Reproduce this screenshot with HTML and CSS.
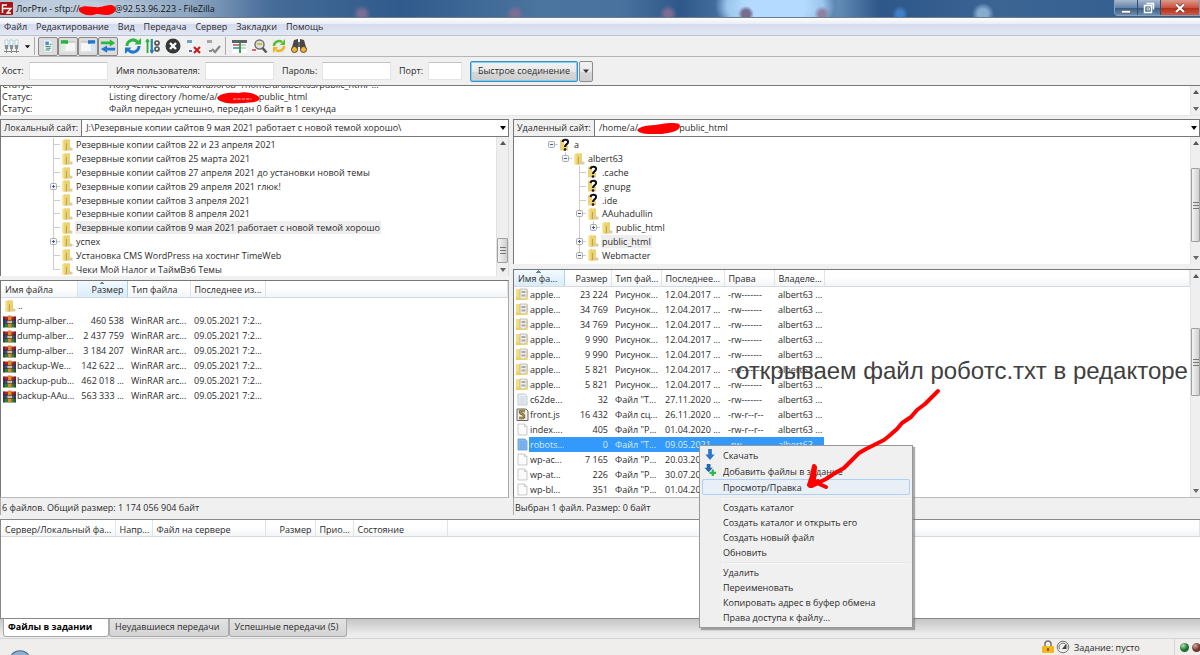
FILE: index.html
```html
<!DOCTYPE html>
<html lang="ru">
<head>
<meta charset="utf-8">
<title>ЛогРти - FileZilla</title>
<link rel="stylesheet" href="styles.css">
</head>
<body>
<svg class="defs" aria-hidden="true">
  <defs>
    <linearGradient id="gold" x1="0" x2="1"><stop offset="0" stop-color="#fbeeb0"/><stop offset="1" stop-color="#e6c65a"/></linearGradient>
    <symbol id="folder" viewBox="0 0 14 14"><path d="M2 2l4-1v12l-4-.5z" fill="url(#gold)"/><path d="M5 2l4-1 1 1v10l-4 1z" fill="#ecd272"/><path d="M6.500 5v7" stroke="#c2a24c"/><path d="M9 9l3.500 1v2.500H7z" fill="#d9cda0"/></symbol>
    <symbol id="unknown" viewBox="0 0 14 14"><path d="M2 2l4-1v11.500H2zM6 7l4 1v4.500H6z" fill="#ecd27b"/><path d="M4.500 4C5 1 11 1 10 4.500 9.500 6.500 7 6.500 7 9" fill="none" stroke="#111" stroke-width="2"/><circle cx="7" cy="11.500" r="1.300" fill="#111"/></symbol>
    <symbol id="plus" viewBox="0 0 9 9"><rect x="1.500" y="1.500" width="6" height="6" rx="1" fill="#f4f4f4" stroke="#aaa"/><path d="M3 4.500h3M4.500 3v3" stroke="#3c5f9e"/></symbol>
    <symbol id="minus" viewBox="0 0 9 9"><rect x="1.500" y="1.500" width="6" height="6" rx="1" fill="#f4f4f4" stroke="#aaa"/><path d="M3 4.500h3" stroke="#3c5f9e"/></symbol>
    <symbol id="rar" viewBox="0 0 13 12"><path d="M0 1h13v3.500H0z" fill="#b5232a"/><path d="M0 4.500h13V8H0z" fill="#3151a5"/><path d="M0 8h13v4H0z" fill="#2f7d3e"/><path d="M0 4.500h13M0 8h13" stroke="#222" stroke-width=".7"/><path d="M1 1v11M12 1v11" stroke="#34242e"/><path d="M5 0h3.500v12H5z" fill="#d98a2b"/><path d="M4 5h5.500v3H4z" fill="#c9c0a8" stroke="#5d3b20" stroke-width=".7"/></symbol>
    <symbol id="image" viewBox="0 0 13 13"><path d="M0 1h6v1h6v10H0z" fill="#f6df78"/><path d="M4 1h7v8l-2 2H4z" fill="#eee" stroke="#aaa" stroke-width=".7"/><path d="M5.500 3h4v2h-4zM5.500 6.500h4v2h-4z" fill="#aaa"/><path d="M0 9l9 3H0z" fill="#efcf52"/></symbol>
    <symbol id="blank" viewBox="0 0 13 13"><path d="M2 1h6.500L11 3.500V12H2z" fill="#fbfbfb" stroke="#bbb" stroke-width=".8"/><path d="M8.500 1v2.500H11" fill="#ddd" stroke="#bbb" stroke-width=".6"/></symbol>
    <symbol id="textfile" viewBox="0 0 13 13"><path d="M2 1h7l2 2v9H2z" fill="#edf2f5" stroke="#b3bdc4" stroke-width=".8"/><path d="M3.500 4h6M3.500 6h6M3.500 8h6M3.500 10h6" stroke="#bfcbd3" stroke-width=".8"/></symbol>
    <symbol id="textsel" viewBox="0 0 13 13"><path d="M2 1h7l2 2v9H2z" fill="#8fc0f5" stroke="#5792d3" stroke-width=".8"/><path d="M3 4h7M3 6h7M3 8h7M3 10h7M5 2v9M8 2v9" stroke="#5b9ae2" stroke-width=".6"/></symbol>
    <symbol id="script" viewBox="0 0 13 13"><path d="M1 1h9l2 2v9.500H1z" fill="#eee" stroke="#555" stroke-width=".9"/><path d="M9 3H5C3 3 4 5.500 6 6s3 3 1 4H3" fill="none" stroke="#5d5030" stroke-width="2.400"/><path d="M9 3H5C3 3 4 5.500 6 6s3 3 1 4H3" fill="none" stroke="#e3bd4f"/></symbol>
  </defs>
</svg>

<header class="titlebar">
  <svg class="app-icon" viewBox="0 0 13 13"><rect width="13" height="13" rx="1" fill="#a81414"/><path d="M2.500 11V3H7M2.500 6.500H6" fill="none" stroke="#fff" stroke-width="1.500"/><path d="M6 6.500h5L7 11h4" fill="none" stroke="#fff" stroke-width="1.300"/></svg>
  <h1 class="title">ЛогРти - sftp://<svg class="redact redact-title" preserveAspectRatio="none" viewBox="0 0 36 12"><path d="M0 4C6 0 14 4 20 3S32-1 35 3c2 5-3 8-9 8-5 0-7-2-12 0C7 12 3 10 0 7z" fill="#f00"/></svg>@92.53.96.223 - FileZilla</h1>
  <div class="win-controls">
    <button class="win" aria-label="Свернуть"><svg viewBox="0 0 12 12"><path d="M1.500 8.500h9v2.500h-9z" fill="#fff" stroke="#555" stroke-width=".6"/></svg></button>
    <button class="win" aria-label="Развернуть"><svg viewBox="0 0 12 12"><path d="M3.500 1.500h7v6M1.500 3.500h7v7h-7z" fill="none" stroke="#fff" stroke-width="1.500"/><path d="M4 6h2.500v2H4z" fill="#38557d" stroke="#fff" stroke-width=".8"/></svg></button>
    <button class="win win-close" aria-label="Закрыть"><svg viewBox="0 0 12 12"><path d="M2 2.500l8 7.500M10 2.500L2 10" stroke="#7a2b23" stroke-width="3.400"/><path d="M2 2.500l8 7.500M10 2.500L2 10" stroke="#fff" stroke-width="2.200"/></svg></button>
  </div>
</header>

<nav class="menubar">
  <button>Файл</button><button>Редактирование</button><button>Вид</button><button>Передача</button><button>Сервер</button><button>Закладки</button><button>Помощь</button>
</nav>

<div class="toolbar">
  <button class="tool tool-site" aria-label="Менеджер сайтов"><svg viewBox="0 0 18 18"><path d="M2 3h3v7H2zM7 3h3v7H7zM12 3h3v7h-3z" fill="#fff" stroke="#aaccd8"/><path d="M2 8h3v4H2zM7 8h3v4H7zM12 8h3v4h-3z" fill="#8a8f91"/><path d="M1 14.500h15M3.500 12v4M8.500 12v4M13.500 12v4" stroke="#848a8c"/></svg></button>
  <button class="tool tool-drop" aria-label="Список сайтов"><svg viewBox="0 0 8 8"><path d="M1 2.500h6L4 6z" fill="#111"/></svg></button>
  <span class="sep"></span>
  <button class="tool pressed" aria-label="Журнал"><svg viewBox="0 0 18 18"><path d="M4 2h7l3 3v11H4z" fill="#eef3f8" stroke="#c5ccd2" stroke-width=".7"/><path d="M6 4h4v4H6z" fill="#4f8fc6"/><path d="M6 9.500h6M6 13.500h5" stroke="#35a04b" stroke-width="1.200"/><path d="M7 11.500h5M11 7h2" stroke="#3d7cbc" stroke-width="1.200"/></svg></button>
  <button class="tool pressed" aria-label="Локальное дерево"><svg viewBox="0 0 18 18"><path d="M1 3h16v12H1z" fill="#f6f6f6"/><path d="M1 3h16v2.500H1z" fill="#c9cccd"/><path d="M1 2.500h8v4H1z" fill="#29b13d"/><path d="M1 6.500h5v8H1z" fill="#d8eedb"/></svg></button>
  <button class="tool pressed" aria-label="Удалённое дерево"><svg viewBox="0 0 18 18"><path d="M1 3h16v12H1z" fill="#f6f6f6"/><path d="M1 3h16v2.500H1z" fill="#c9cccd"/><path d="M9 2.500h8v4H9z" fill="#2377ce"/><path d="M12 6.500h5v8h-5z" fill="#d6e5f5"/></svg></button>
  <button class="tool pressed" aria-label="Очередь"><svg viewBox="0 0 18 18"><path d="M1 4h10V1.500l6 4.200-6 4V7H1z" fill="#29b940"/><path d="M17 11H8V8.500l-7 4 7 4V14h9z" fill="#2377ce"/></svg></button>
  <button class="tool first-action" aria-label="Обновить"><svg viewBox="0 0 18 18"><path d="M3 9a6 6 0 0 1 10.500-4" fill="none" stroke="#2bb741" stroke-width="3"/><path d="M10.500 7.500H17V1z" fill="#2bb741"/><path d="M15 9A6 6 0 0 1 4.500 13" fill="none" stroke="#2377ce" stroke-width="3"/><path d="M7.500 10.500H1V17z" fill="#2377ce"/></svg></button>
  <button class="tool" aria-label="Обработка очереди"><svg viewBox="0 0 18 18"><path d="M3.500 2v14M2 5l1.500-2L5 5M7.500 2v14" stroke="#29ad3d" stroke-width="1.800" fill="none"/><path d="M8 2v14M6.500 13L8 15.500 9.500 13" stroke="#2377ce" stroke-width="1.500" fill="none"/><circle cx="13" cy="6" r="2" fill="none" stroke="#555" stroke-width="1.700"/><circle cx="13" cy="12" r="2" fill="none" stroke="#555" stroke-width="1.700"/></svg></button>
  <button class="tool" aria-label="Отменить"><svg viewBox="0 0 18 18"><circle cx="9" cy="9" r="7.500" fill="#36393a"/><path d="M6 6l6 6M12 6l-6 6" stroke="#fff" stroke-width="2.400"/></svg></button>
  <button class="tool" aria-label="Отключиться"><svg viewBox="0 0 18 18"><path d="M3 2h7v14H3z" fill="#eef3f6"/><path d="M3 3h5v3H3z" fill="#719fc5"/><path d="M5 13h3v2H5z" fill="#668"/><path d="M10 10l6 6M16 10l-6 6" stroke="#c41f1f" stroke-width="2.200"/></svg></button>
  <button class="tool" aria-label="Переподключиться"><svg viewBox="0 0 18 18"><path d="M2 2h7v14H2z" fill="#eee"/><path d="M3 3h5v3H3z" fill="#a3a7a9"/><path d="M5 13h3v2H5z" fill="#888"/><path d="M8 12l3 3 5-6" fill="none" stroke="#888" stroke-width="2.200"/></svg></button>
  <span class="sep"></span>
  <button class="tool" aria-label="Фильтр"><svg viewBox="0 0 18 18"><path d="M2 3h15v13H2z" fill="#fff"/><path d="M2 3h15v3H2z" fill="#5d6265"/><path d="M3 8h6" stroke="#c54b4b" stroke-width="1.500"/><path d="M3 11h6" stroke="#3a7ec0" stroke-width="1.500"/><path d="M11 8h5M11 11h5" stroke="#999"/><path d="M9 6h2v10H9z" fill="#31a748"/></svg></button>
  <button class="tool" aria-label="Сравнение каталогов"><svg viewBox="0 0 18 18"><path d="M1 3h12v12H1z" fill="#f3f3f3"/><path d="M2 13h4" stroke="#d33" stroke-width="1.500"/><circle cx="9.500" cy="7.500" r="4.500" fill="#d6e4dc" stroke="#737373" stroke-width="1.500"/><path d="M7 7h5" stroke="#dfae55" stroke-width="2"/><path d="M12.500 11l4 4.500" stroke="#555" stroke-width="2.500"/></svg></button>
  <button class="tool" aria-label="Синхронный просмотр"><svg viewBox="0 0 18 18"><path d="M2 2h13v14H2z" fill="#e8ecee"/><path d="M4 9a5 5 0 0 1 8-4" fill="none" stroke="#58bd2f" stroke-width="2.500"/><path d="M10 8h5V2z" fill="#58bd2f"/><path d="M14 9a5 5 0 0 1-8 4" fill="none" stroke="#efb520" stroke-width="2.500"/><path d="M8 10H3v6z" fill="#efb520"/></svg></button>
  <button class="tool" aria-label="Поиск"><svg viewBox="0 0 18 18"><path d="M4 3l4-1v10H1.500zM14 3l-4-1v10h6.500z" fill="#494747"/><path d="M8 5h2v5H8z" fill="#656565"/><circle cx="4.500" cy="12.500" r="3" fill="#f3b43d" stroke="#574429"/><circle cx="13.500" cy="12.500" r="3" fill="#f3b43d" stroke="#574429"/></svg></button>
</div>

<form class="quick">
  <label for="host">Хост:</label><input id="host">
  <label for="user">Имя пользователя:</label><input id="user">
  <label for="pass">Пароль:</label><input id="pass" type="password">
  <label for="port">Порт:</label><input id="port">
  <button class="connect" type="button">Быстрое соединение</button>
  <button class="connect-drop" type="button" aria-label="История"><svg viewBox="0 0 8 8"><path d="M1 2.500h6L4 6z" fill="#333"/></svg></button>
</form>

<section class="log">
  <div class="log-lines">
    <p><span>Статус:</span><span>Получение списка каталогов "/home/a/albert63/public_html"...</span></p>
    <p><span>Статус:</span><span>Listing directory /home/a/<svg class="redact redact-log" preserveAspectRatio="none" viewBox="0 0 40 12"><path d="M0 6C2 1 13 0 20 1c7-2 17 1 19 4 3 5-8 6-14 6-9 1-22 1-25-5z" fill="#f00"/><path d="M15 7h17" stroke="#ffc2c2" stroke-dasharray="3 1"/></svg>public_html</span></p>
    <p><span>Статус:</span><span>Файл передан успешно, передан 0 байт в 1 секунда</span></p>
  </div>
  <div class="scroll"><i class="up"></i><i class="down"></i></div>
</section>

<main class="sites">
  <section class="site site-local">
    <div class="path"><label for="local">Локальный сайт:</label><button class="path-box" id="local"><span>J:\Резервные копии сайтов 9 мая 2021 работает с новой темой хорошо\</span><i class="caret"></i></button></div>
    <div class="tree-wrap tree-local">
      <ul class="tree">
        <li><b class="branch"></b><svg class="ic"><use href="#folder"/></svg><span>Резервные копии сайтов 22 и 23 апреля 2021</span></li>
        <li><b class="branch"></b><svg class="ic"><use href="#folder"/></svg><span>Резервные копии сайтов 25 марта 2021</span></li>
        <li><b class="branch"></b><svg class="ic"><use href="#folder"/></svg><span>Резервные копии сайтов 27 апреля 2021 до установки новой темы</span></li>
        <li><b class="branch"><svg><use href="#plus"/></svg></b><svg class="ic"><use href="#folder"/></svg><span>Резервные копии сайтов 29 апреля 2021 глюк!</span></li>
        <li><b class="branch"></b><svg class="ic"><use href="#folder"/></svg><span>Резервные копии сайтов 3 апреля 2021</span></li>
        <li><b class="branch"></b><svg class="ic"><use href="#folder"/></svg><span>Резервные копии сайтов 8 апреля 2021</span></li>
        <li><b class="branch"></b><svg class="ic"><use href="#folder"/></svg><span class="chosen">Резервные копии сайтов 9 мая 2021 работает с новой темой хорошо</span></li>
        <li><b class="branch"><svg><use href="#plus"/></svg></b><svg class="ic"><use href="#folder"/></svg><span>успех</span></li>
        <li><b class="branch"></b><svg class="ic"><use href="#folder"/></svg><span>Установка CMS WordPress на хостинг TimeWeb</span></li>
        <li><b class="branch last"></b><svg class="ic"><use href="#folder"/></svg><span>Чеки Мой Налог и ТаймВэб Темы</span></li>
      </ul>
      <div class="scroll"><i class="up"></i><i class="thumb thumb-low"></i><i class="down"></i></div>
    </div>
    <div class="list-wrap">
      <table class="list">
        <colgroup><col class="l1"><col class="l2"><col class="l3"><col class="l4"><col></colgroup>
        <thead><tr><th>Имя файла</th><th class="num sorted">Размер</th><th>Тип файла</th><th>Последнее из...</th><th></th></tr></thead>
        <tbody>
          <tr><td><svg class="ic"><use href="#folder"/></svg>..</td><td></td><td></td><td></td><td></td></tr>
          <tr><td><svg class="fi"><use href="#rar"/></svg>dump-alber...</td><td class="num">460 538</td><td>WinRAR arc...</td><td>09.05.2021 7:2...</td><td></td></tr>
          <tr><td><svg class="fi"><use href="#rar"/></svg>dump-alber...</td><td class="num">2 437 759</td><td>WinRAR arc...</td><td>09.05.2021 7:2...</td><td></td></tr>
          <tr><td><svg class="fi"><use href="#rar"/></svg>dump-alber...</td><td class="num">3 184 207</td><td>WinRAR arc...</td><td>09.05.2021 7:2...</td><td></td></tr>
          <tr><td><svg class="fi"><use href="#rar"/></svg>backup-We...</td><td class="num">142 622 ...</td><td>WinRAR arc...</td><td>09.05.2021 7:2...</td><td></td></tr>
          <tr><td><svg class="fi"><use href="#rar"/></svg>backup-pub...</td><td class="num">462 018 ...</td><td>WinRAR arc...</td><td>09.05.2021 7:2...</td><td></td></tr>
          <tr><td><svg class="fi"><use href="#rar"/></svg>backup-AAu...</td><td class="num">563 333 ...</td><td>WinRAR arc...</td><td>09.05.2021 7:2...</td><td></td></tr>
        </tbody>
      </table>
    </div>
    <p class="summary">6 файлов. Общий размер: 1 174 056 904 байт</p>
  </section>

  <section class="site site-remote">
    <div class="path"><label for="remote">Удаленный сайт:</label><button class="path-box" id="remote"><span>/home/a/<svg class="redact redact-path" preserveAspectRatio="none" viewBox="0 0 40 12"><path d="M0 7C6 1 15 3 23 1c7-1 17-2 17 2 0 5-9 7-17 8-9 0-20 1-23-4z" fill="#f00"/></svg>public_html</span><i class="caret"></i></button></div>
    <div class="tree-wrap tree-remote">
      <ul class="tree">
        <li class="d0"><b class="branch only"><svg><use href="#minus"/></svg></b><svg class="ic"><use href="#unknown"/></svg><span>a</span></li>
        <li class="d1"><b class="branch last"><svg><use href="#minus"/></svg></b><svg class="ic"><use href="#folder"/></svg><span>albert63</span></li>
        <li class="d2"><b class="branch"></b><svg class="ic"><use href="#unknown"/></svg><span>.cache</span></li>
        <li class="d2"><b class="branch"></b><svg class="ic"><use href="#unknown"/></svg><span>.gnupg</span></li>
        <li class="d2"><b class="branch"></b><svg class="ic"><use href="#unknown"/></svg><span>.ide</span></li>
        <li class="d2"><b class="branch"><svg><use href="#minus"/></svg></b><svg class="ic"><use href="#folder"/></svg><span>AAuhadullin</span></li>
        <li class="d2"><b class="branch pass"></b><b class="branch last"><svg><use href="#plus"/></svg></b><svg class="ic"><use href="#folder"/></svg><span>public_html</span></li>
        <li class="d2"><b class="branch"><svg><use href="#plus"/></svg></b><svg class="ic"><use href="#folder"/></svg><span class="chosen">public_html</span></li>
        <li class="d2"><b class="branch last"><svg><use href="#minus"/></svg></b><svg class="ic"><use href="#folder"/></svg><span>Webmacter</span></li>
      </ul>
      <div class="scroll"><i class="up"></i><i class="thumb thumb-mid"></i><i class="down"></i></div>
    </div>
    <div class="list-wrap">
      <table class="list">
        <colgroup><col class="r1"><col class="r2"><col class="r3"><col class="r4"><col class="r5"><col class="r6"><col></colgroup>
        <thead><tr><th class="sorted">Имя фа...</th><th class="num">Размер</th><th>Тип фай...</th><th>Последнее...</th><th>Права</th><th>Владеле...</th><th></th></tr></thead>
        <tbody>
          <tr><td><svg class="fi"><use href="#image"/></svg>apple...</td><td class="num">23 224</td><td>Рисунок...</td><td>12.04.2017 ...</td><td>-rw-------</td><td>albert63 ...</td><td></td></tr>
          <tr><td><svg class="fi"><use href="#image"/></svg>apple...</td><td class="num">34 769</td><td>Рисунок...</td><td>12.04.2017 ...</td><td>-rw-------</td><td>albert63 ...</td><td></td></tr>
          <tr><td><svg class="fi"><use href="#image"/></svg>apple...</td><td class="num">34 769</td><td>Рисунок...</td><td>12.04.2017 ...</td><td>-rw-------</td><td>albert63 ...</td><td></td></tr>
          <tr><td><svg class="fi"><use href="#image"/></svg>apple...</td><td class="num">9 990</td><td>Рисунок...</td><td>12.04.2017 ...</td><td>-rw-------</td><td>albert63 ...</td><td></td></tr>
          <tr><td><svg class="fi"><use href="#image"/></svg>apple...</td><td class="num">9 990</td><td>Рисунок...</td><td>12.04.2017 ...</td><td>-rw-------</td><td>albert63 ...</td><td></td></tr>
          <tr><td><svg class="fi"><use href="#image"/></svg>apple...</td><td class="num">5 821</td><td>Рисунок...</td><td>12.04.2017 ...</td><td>-rw-------</td><td>albert63 ...</td><td></td></tr>
          <tr><td><svg class="fi"><use href="#image"/></svg>apple...</td><td class="num">5 821</td><td>Рисунок...</td><td>12.04.2017 ...</td><td>-rw-------</td><td>albert63 ...</td><td></td></tr>
          <tr><td><svg class="fi"><use href="#textfile"/></svg>c62de...</td><td class="num">32</td><td>Файл "T...</td><td>27.11.2020 ...</td><td>-rw-------</td><td>albert63 ...</td><td></td></tr>
          <tr><td><svg class="fi"><use href="#script"/></svg>front.js</td><td class="num">16 432</td><td>Файл сц...</td><td>26.11.2020 ...</td><td>-rw-r--r--</td><td>albert63 ...</td><td></td></tr>
          <tr><td><svg class="fi"><use href="#blank"/></svg>index....</td><td class="num">405</td><td>Файл "P...</td><td>01.04.2020 ...</td><td>-rw-r--r--</td><td>albert63 ...</td><td></td></tr>
          <tr class="selected"><td><svg class="fi"><use href="#textsel"/></svg>robots...</td><td class="num">0</td><td>Файл "T...</td><td>09.05.2021 ...</td><td>-rw-------</td><td>albert63 ...</td><td></td></tr>
          <tr><td><svg class="fi"><use href="#blank"/></svg>wp-ac...</td><td class="num">7 165</td><td>Файл "P...</td><td>20.03.2020 ...</td><td></td><td></td><td></td></tr>
          <tr><td><svg class="fi"><use href="#blank"/></svg>wp-at...</td><td class="num">226</td><td>Файл "P...</td><td>30.07.2020 ...</td><td></td><td></td><td></td></tr>
          <tr><td><svg class="fi"><use href="#blank"/></svg>wp-bl...</td><td class="num">351</td><td>Файл "P...</td><td>01.04.2020 ...</td><td></td><td></td><td></td></tr>
        </tbody>
      </table>
      <div class="scroll"><i class="up"></i><i class="thumb thumb-list"></i><i class="down"></i></div>
    </div>
    <p class="summary">Выбран 1 файл. Размер: 0 байт</p>
  </section>
</main>

<section class="queue">
  <table class="list">
    <colgroup><col class="q1"><col class="q2"><col class="q3"><col class="q4"><col class="q5"><col class="q6"><col></colgroup>
    <thead><tr><th>Сервер/Локальный фа...</th><th>Напр...</th><th>Файл на сервере</th><th class="num">Размер</th><th>Прио...</th><th>Состояние</th><th></th></tr></thead>
  </table>
</section>

<nav class="tabs">
  <button class="tab tab-on">Файлы в задании</button><button class="tab">Неудавшиеся передачи</button><button class="tab">Успешные передачи (5)</button>
</nav>

<footer class="statusbar">
  <svg class="orb" viewBox="0 0 28 8"><ellipse cx="14" cy="10" rx="12" ry="9" fill="#8fb1d0" stroke="#44688f" stroke-width="1.500"/></svg>
  <div class="status-right">
    <svg class="lock" viewBox="0 0 12 14"><path d="M3 7V4a3 3 0 0 1 6 0v3" fill="none" stroke="#777" stroke-width="1.600"/><rect y="6" width="12" height="7" rx="1" fill="#f3b61d"/><path d="M6 8v3" stroke="#6b4a00" stroke-width="1.500"/></svg>
    <svg class="gauge" viewBox="0 0 14 14"><circle cx="7" cy="7" r="5.800" fill="#eee" stroke="#777"/><path d="M3.500 9a4 4 0 1 1 7 0" fill="none" stroke="#777"/><path d="M6 9l4-5v5z" fill="#444"/></svg>
    <span class="job">Задание: пусто</span>
    <i class="led led-green"></i><i class="led led-red"></i>
  </div>
</footer>

<menu class="context">
  <li><button><svg viewBox="0 0 14 14"><path d="M5 1h4v6h3l-5 6-5-6h3z" fill="#2b78cb"/></svg>Скачать</button></li>
  <li><button><svg viewBox="0 0 14 14"><path d="M3.500 0h4v4H10l-4.500 5L1 4h2.500z" fill="#2468ae"/><path d="M10 6v7M6.500 9.500h7" stroke="#2eb84a" stroke-width="2.400"/></svg>Добавить файлы в задание</button></li>
  <li><button class="hover">Просмотр/Правка</button></li>
  <li class="rule"></li>
  <li><button>Создать каталог</button></li>
  <li><button>Создать каталог и открыть его</button></li>
  <li><button>Создать новый файл</button></li>
  <li><button>Обновить</button></li>
  <li class="rule"></li>
  <li><button>Удалить</button></li>
  <li><button>Переименовать</button></li>
  <li><button>Копировать адрес в буфер обмена</button></li>
  <li><button>Права доступа к файлу...</button></li>
</menu>

<p class="note">открываем файл роботс.тхт в редакторе</p>
<svg class="arrow" viewBox="0 0 140 104"><path d="M133 6L126 13 120 19 112 25 106 32 97 38 92 44 84 51 79 55 71 59 61 64 54 68 47 75 39 83 30 88 21 94 7 101" fill="none" stroke="#f00" stroke-width="4" stroke-linecap="round" stroke-linejoin="round"/><path d="M9 81L7 91 4 100 12 98 21 102M10 82l-1 12-4 7 8-5" fill="none" stroke="#f00" stroke-width="4" stroke-linecap="round" stroke-linejoin="round"/></svg>
</body>
</html>
```
FILE: styles.css
```css
* { box-sizing: border-box; }
body {
  margin: 0;
  min-height: 100vh;
  position: relative;
  display: flex;
  flex-direction: column;
  overflow: hidden;
  background: #f0f0f0;
  color: #2b2b2b;
  font: 9px/14px "Open Sans", "Noto Sans", sans-serif;
}
button, input { font: inherit; color: inherit; margin: 0; padding: 0; border: 0; background: none; border-radius: 0; }
p, h1, ul, menu { margin: 0; padding: 0; list-style: none; font-weight: normal; }
svg { display: block; flex: none; }
i { display: block; }
.defs { position: absolute; width: 0; height: 0; }
.redact { display: inline-block; vertical-align: middle; height: 12px; margin: -2px -1px; }
.redact-title { width: 37px; }
.redact-log { width: 43px; }
.redact-path { width: 43px; }

.titlebar {
  display: flex;
  height: 18px;
  background:
    radial-gradient(ellipse 120px 20px at 60px 9px, #c5d3e2d0 40%, transparent),
    radial-gradient(circle at 515px 14px, #7c6d93 3px, transparent 9px),
    radial-gradient(circle at 668px 14px, #7c6d93 3px, transparent 9px),
    radial-gradient(circle at 362px 14px, #7c6d93 3px, transparent 9px),
    radial-gradient(circle at 746px 14px, #766e8e 4px, transparent 8px),
    radial-gradient(circle at 822px 14px, #8f809f 3px, transparent 8px),
    radial-gradient(circle at 900px 14px, #3f80c8 3px, transparent 8px),
    radial-gradient(circle at 983px 14px, #86acd0 5px, transparent 11px),
    radial-gradient(ellipse 60px 34px at 775px 6px, #b4daff 50%, #9cc6ee 80%, transparent),
    linear-gradient(90deg, #a2b7ce 0, #8fa8c3 190px, #466c98 270px, #2f5a8b 400px, #4b749f 540px, #4a729f 620px, #2e588a 680px, #4a75a2 730px, #6089b3 840px, #2e578a 880px, #3c6594 1000px, #2f5c8d);
  border-bottom: 1px solid #6d7b8b;
}
.app-icon { width: 13px; height: 13px; margin-top: 2px; }
.title { flex: 1; padding-left: 3px; font-size: 9px; line-height: 18px; color: #111; white-space: nowrap; }
.win-controls { display: flex; height: 16px; border: 1px solid #dbe4ee80; border-top: 0; border-radius: 0 0 0 4px; }
.win { display: grid; place-items: center; width: 23px; background: linear-gradient(#a7bacf, #6684a8 50%, #34577f 51%, #6b8cb0); border-right: 1px solid #34506f; }
.win svg { width: 12px; height: 12px; }
.win-close { width: 38px; border: 0; background: linear-gradient(#dc9a8c, #c95441 50%, #b02b16 51%, #cf5a45); }

.menubar { display: flex; gap: 9px; height: 18px; padding-left: 4px; background: linear-gradient(#fdfdfe, #eaeff5 33%, #d5dbee 34%, #e2e7f3); border-bottom: 1px solid #b9c3d2; }

.toolbar { display: flex; align-items: center; height: 21px; padding-left: 2px; border-bottom: 1px solid #b5b5b5; }
.tool { display: grid; place-items: center; width: 20px; height: 20px; }
.tool svg { width: 18px; height: 18px; }
.tool-drop { width: 10px; }
.tool-drop svg { width: 7px; height: 7px; }
.sep { width: 1px; height: 18px; margin: 0 3px 0 2px; background: #aaa; }
.pressed { height: 19px; border: 1px solid #888; border-radius: 2px; background: #dcdcdc; }
.pressed svg { width: 16px; height: 16px; }
.first-action { margin-left: 5px; }

.quick { display: flex; align-items: center; height: 28px; }
.quick label { padding-left: 8px; white-space: nowrap; }
.quick label[for="host"] { padding-left: 2px; width: 29px; }
.quick label[for="user"] { width: 97px; }
.quick label[for="pass"] { width: 48px; }
.quick label[for="port"] { width: 37px; }
.quick input { width: 69px; height: 18px; background: #fff; border: 1px solid #e3e3e3; border-top-color: #c4c4c4; }
.quick #host { width: 79px; }
.quick #port { width: 34px; }
.connect { width: 108px; height: 21px; margin-left: 8px; border: 1px solid #3c8fc4; border-radius: 2px; box-shadow: inset 0 0 0 1px #7fcdf0; background: linear-gradient(#f2f2f2, #e8e8e8 50%, #d6d6d6 51%, #cfcfcf); white-space: nowrap; }
.connect-drop { display: grid; place-items: center; width: 14px; height: 21px; margin-left: 1px; border: 1px solid #8c8c8c; border-radius: 2px; background: linear-gradient(#f2f2f2, #e8e8e8 50%, #d6d6d6 51%, #cfcfcf); }
.connect-drop svg { width: 8px; height: 8px; }

.log { display: flex; height: 31px; background: #fff; border: 1px solid #777; border-width: 1px 0 1px 1px; border-bottom-color: #e6e6e6; overflow: hidden; }
.log-lines { flex: 1; display: flex; flex-direction: column; justify-content: flex-end; line-height: 12px; }
.log p { display: grid; grid-template-columns: 107px 1fr; padding-left: 1px; height: 12px; flex: none; white-space: nowrap; }

.scroll { flex: none; display: flex; flex-direction: column; align-items: center; width: 10px; padding: 4px 0; background: #efefef; border-left: 1px solid #e2e2e2; }
.tree-local .scroll { width: 13px; border-right: 1px solid #ddd; }
.up, .down { border: 3px solid transparent; }
.up { border-top: 0; border-bottom: 4px solid #555; }
.down { border-bottom: 0; border-top: 4px solid #666; margin-top: auto; }
.thumb { width: 100%; height: 25px; margin-top: auto; border: 1px solid #a0a0a0; border-radius: 1px; background: repeating-linear-gradient(#777 0 1px, transparent 1px 3px) center / 6px 7px no-repeat, linear-gradient(90deg, #f4f4f4, #cfcfcf); }
.thumb-low + .down { margin-top: 5px; }
.thumb-mid { height: 74px; }
.thumb-mid + .down { margin-top: 14px; }
.thumb-list { height: 68px; margin-top: 50px; }

.sites { flex: 1; display: grid; grid-template-columns: 509fr 687fr; gap: 4px; padding-top: 3px; }
.site { min-width: 0; display: flex; flex-direction: column; }
.path { display: flex; height: 18px; border: 1px solid #777; background: #f0f0f0; line-height: 16px; }
.path label { flex: none; padding: 0 3px; border-right: 1px solid #777; white-space: nowrap; }
.path-box { flex: 1; display: flex; align-items: center; justify-content: space-between; padding: 0 2px 0 4px; background: #fff; text-align: left; white-space: nowrap; }
.caret { border: 3px solid transparent; border-top: 4px solid #000; border-bottom: 0; }

.tree-wrap { display: flex; background: #fff; border-left: 1px solid #777; overflow: hidden; }
.tree-local { height: 139px; }
.tree-remote { height: 127px; }
.tree { flex: 1; display: flex; flex-direction: column; padding-top: 1px; }
.tree-remote .tree { padding-bottom: 2px; }
.tree li { flex: 1; display: flex; align-items: center; padding-left: 45px; white-space: nowrap; min-height: 0; }
.tree .d0 { padding-left: 30px; }
.tree .d1 { padding-left: 44px; }
.tree .d2 { padding-left: 58px; }
.tree li > span { padding: 0 1px; line-height: 13px; }
.tree .chosen { background: #eee; }
.ic { width: 14px; height: 14px; margin-right: 1px; }
.branch { align-self: stretch; display: grid; place-items: center; width: 14px; background: linear-gradient(#ccc, #ccc) 7px 0 / 1px 100% no-repeat, linear-gradient(#ccc, #ccc) 100% 50% / 7px 1px no-repeat; }
.branch svg { width: 9px; height: 9px; }
.branch.last { background: linear-gradient(#ccc, #ccc) 7px 0 / 1px 50% no-repeat, linear-gradient(#ccc, #ccc) 100% 50% / 7px 1px no-repeat; }
.branch.only { background: linear-gradient(#ccc, #ccc) 100% 50% / 7px 1px no-repeat; }
.branch.pass { background: linear-gradient(#ccc, #ccc) 7px 0 / 1px 100% no-repeat; }

.list-wrap { flex: 1; display: flex; align-items: stretch; margin-top: 4px; background: #fff; border: 1px solid #777; border-width: 1px 0 1px 1px; border-bottom-color: #bbb; overflow: hidden; }
.site-local .list-wrap { border-right: 1px solid #aaa; }
.tree-remote + .list-wrap { margin-top: 5px; }
.list { width: 100%; height: max-content; table-layout: fixed; border-collapse: collapse; }
.list-wrap .list { flex: 1; min-width: 0; }
.list th, .list td { padding: 0 4px; height: 15px; line-height: 15px; text-align: left; font-weight: normal; white-space: nowrap; overflow: hidden; }
.list th { height: 16px; padding-top: 2px; line-height: 13px; background: linear-gradient(#fff 40%, #f2f4f6); border-right: 1px solid #e0e4e8; border-bottom: 1px solid #d5dade; }
.list .num { text-align: right; padding-right: 3px; }
.list th.sorted { background: conic-gradient(from 135deg at 50% 0, #5f86a8 90deg, transparent 0) center top / 6px 3px no-repeat, linear-gradient(#f3fafe, #d9ecf9); border-right-color: #a9d3ee; }
.list td:first-child { padding-left: 2px; padding-right: 0; }
.list td svg { display: inline-block; vertical-align: middle; }
.fi { width: 13px; height: 13px; margin-right: 1px; margin-top: -1px; }
.l1 { width: 76px; } .l2 { width: 50px; } .l3 { width: 63px; } .l4 { width: 75px; }
.r1 { width: 50px; } .r2 { width: 47px; } .r3 { width: 50px; } .r4 { width: 63px; } .r5 { width: 50px; } .r6 { width: 50px; }
.q1 { width: 114px; } .q2 { width: 37px; } .q3 { width: 113px; } .q4 { width: 50px; } .q5 { width: 38px; } .q6 { width: 94px; }
.selected td { background: #3399fa; color: #d9ecff; }
.selected td:first-child { background: linear-gradient(90deg, #fff 15px, #3399fa 15px); }
.selected td:last-child { background: #fff; }
.summary { height: 17px; line-height: 19px; border-left: 1px solid #aaa; padding-left: 1px; }

.queue { height: 100px; margin-top: 4px; background: #fff; border: 1px solid #888; border-right: 0; }
.queue .list th { padding-top: 3px; }
.tabs { display: flex; height: 20px; padding-left: 3px; background: linear-gradient(#c6c6c6, #ececec 80%); border-bottom: 1px solid #d5d5d5; }
.tab { height: 18px; padding: 0 8px 0 5px; border: 1px solid #aaa; border-top: 0; border-radius: 0 0 3px 3px; background: linear-gradient(#e2e2e2, #d5d5d5); white-space: nowrap; }
.tab-on { width: 106px; padding-left: 4px; background: #fff; font-weight: bold; text-align: left; color: #000; }

.statusbar { display: flex; justify-content: space-between; height: 17px; background: #efeeec; }
.orb { width: 28px; height: 6px; margin: 11px 0 0 6px; }
.status-right { display: flex; align-items: center; }
.lock { width: 12px; height: 14px; margin-right: 2px; }
.gauge { width: 14px; height: 14px; margin-right: 4px; }
.job { width: 101px; line-height: 19px; border-right: 1px solid #d5d5d5; margin-right: 5px; }
.led { width: 9px; height: 9px; margin-right: 3px; border-radius: 50%; }
.led-green { background: radial-gradient(circle at 35% 30%, #b5ddb5, #1c7a30 50%, #0d4a1a); }
.led-red { margin-right: -1px; background: radial-gradient(circle at 35% 30%, #cfa9a0, #7c3a32 50%, #4b1f1a); }

.context { position: absolute; left: 699px; top: 445px; width: 214px; padding: 1px 2px 2px; border: 1px solid #979797; background: linear-gradient(90deg, #efefef 21px, #e2e2e2 21px, #fbfbfb 22px, #f0f0f0 23px); box-shadow: 2px 2px 1px #7779; }
.context li { display: flex; height: 15px; }
.context li:nth-child(-n+3) { height: 16px; }
.context button { position: relative; flex: 1; padding-left: 20px; text-align: left; border: 1px solid transparent; line-height: 13px; white-space: nowrap; }
.context button svg { position: absolute; left: 0; top: 0; width: 14px; height: 13px; }
.context .hover { border-color: #aecff7; border-radius: 2px; background: #e8eff7; }
.context .rule { height: 5px; margin-left: 20px; background: linear-gradient(#e0e0e0, #fff) center / 100% 2px no-repeat; }

.note { position: absolute; left: 736px; top: 357px; font: 24px/28px "Liberation Sans", Arial, sans-serif; color: #404040; white-space: nowrap; }
.arrow { position: absolute; left: 805px; top: 385px; width: 140px; height: 104px; }
```
